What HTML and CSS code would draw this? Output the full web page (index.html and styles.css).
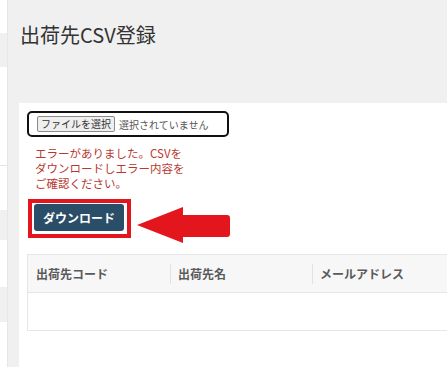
FILE: index.html
```html
<!DOCTYPE html>
<html lang="ja">
<head>
  <meta charset="UTF-8" />
  <title>出荷先CSV登録</title>
  <link rel="stylesheet" href="styles.css">
</head>
<body>

<div class="page">
  <!-- サイドバー（端だけ見えている） -->
  <aside class="sidebar">
    <div class="side-item side-gap-top"></div>
    <div class="side-item side-active"></div>
    <div class="side-line"></div>
    <div class="side-item side-band1"></div>
    <div class="side-item side-band2"></div>
  </aside>

  <main class="main">
    <h1 class="title">出荷先CSV登録</h1>

    <section class="card">
      <div class="file-box">
        <span class="file-btn">ファイルを選択</span>
        <span class="file-name">選択されていません</span>
      </div>

      <div class="error">
        <div>エラーがありました。CSVを</div>
        <div>ダウンロードしエラー内容を</div>
        <div>ご確認ください。</div>
      </div>

      <div class="download-row">
        <div class="highlight">
          <button class="download-btn">ダウンロード</button>
        </div>
        <svg class="arrow" width="95" height="38" viewBox="0 0 95 38">
          <path d="M0 19 L46 1 L46 9 L90 9 Q93 9 93 12 L93 28 Q93 31 90 31 L46 31 L46 37 Z" fill="#e3161e"/>
        </svg>
      </div>

      <table class="list">
        <thead>
          <tr>
            <th class="col-code">出荷先コード</th>
            <th class="col-name">出荷先名</th>
            <th class="col-mail">メールアドレス</th>
          </tr>
        </thead>
        <tbody>
          <tr><td></td><td></td><td></td></tr>
        </tbody>
      </table>
    </section>
  </main>
</div>

</body>
</html>
```

FILE: styles.css
```css
html, body {
  margin: 0;
  padding: 0;
  height: 100%;
  overflow: hidden;
}
body {
  font-family: "Noto Sans CJK JP", "Noto Sans", sans-serif;
  background: #ffffff;
  color: #333;
}
.page {
  display: flex;
  height: 367px;
  overflow: hidden;
}
.sidebar {
  width: 7px;
  flex: none;
  background: #fff;
  border-right: 1px solid #e6e6e6;
}
.side-item {
  background: #f0f0f0;
}
.side-gap-top {
  height: 33px;
  background: #fff;
}
.side-active {
  height: 34px;
}
.side-line {
  height: 1px;
  margin-top: 98px;
  background: #e4e4e4;
}
.side-band1 {
  height: 30px;
  margin-top: 44px;
}
.side-band2 {
  height: 35px;
  margin-top: 47px;
}
.main {
  flex: 1;
  background: #f0f0f0;
  min-width: 0;
  overflow: hidden;
}
.title {
  margin: 0;
  padding: 22px 0 0 12px;
  height: 103px;
  box-sizing: border-box;
  font-size: 20px;
  line-height: 26px;
  font-weight: normal;
  color: #333;
}
.card {
  margin-left: 11px;
  background: #fff;
  padding: 8px 0 0 8px;
  width: 470px;
  height: 280px;
}
.file-box {
  display: flex;
  align-items: center;
  width: 190px;
  height: 22px;
  border: 2px solid #111;
  border-radius: 5px;
  padding: 0 0 0 8px;
}
.file-btn {
  font-size: 10px;
  line-height: 14px;
  padding: 0 3px;
  background: #efefef;
  border: 1px solid #8a8a8a;
  border-radius: 2px;
  color: #333;
}
.file-name {
  margin-left: 4px;
  font-size: 10px;
  color: #555;
}
.error {
  margin: 9px 0 0 8px;
  font-size: 11.5px;
  line-height: 15px;
  color: #b8392e;
}
.download-row {
  display: flex;
  align-items: flex-start;
  margin: 8px 0 0 1px;
}
.highlight {
  border: 4px solid #e3161e;
  padding: 1px 3px 3px 2px;
}
.download-btn {
  display: block;
  width: 90px;
  height: 27px;
  border: none;
  border-radius: 3px;
  background: #2b4e68;
  color: #fff;
  font-family: inherit;
  font-size: 12px;
  font-weight: bold;
  cursor: pointer;
}
.arrow {
  margin: 7px 0 0 6px;
}
.list {
  margin-top: 10px;
  width: 470px;
  border-collapse: collapse;
  border: 1px solid #e6e6e6;
  font-size: 12px;
}
.list th {
  position: relative;
  height: 37px;
  padding: 0 8px;
  text-align: left;
  background: #f7f7f8;
  color: #5a5a5a;
  font-weight: bold;
  border-bottom: 1px solid #e6e6e6;
}
.list th + th::before {
  content: "";
  position: absolute;
  left: 0;
  top: 9px;
  bottom: 8px;
  border-left: 1px solid #e2e2e2;
}
.col-code, .col-name {
  width: 126px;
}
.list td {
  height: 37px;
  padding: 0;
}
```
